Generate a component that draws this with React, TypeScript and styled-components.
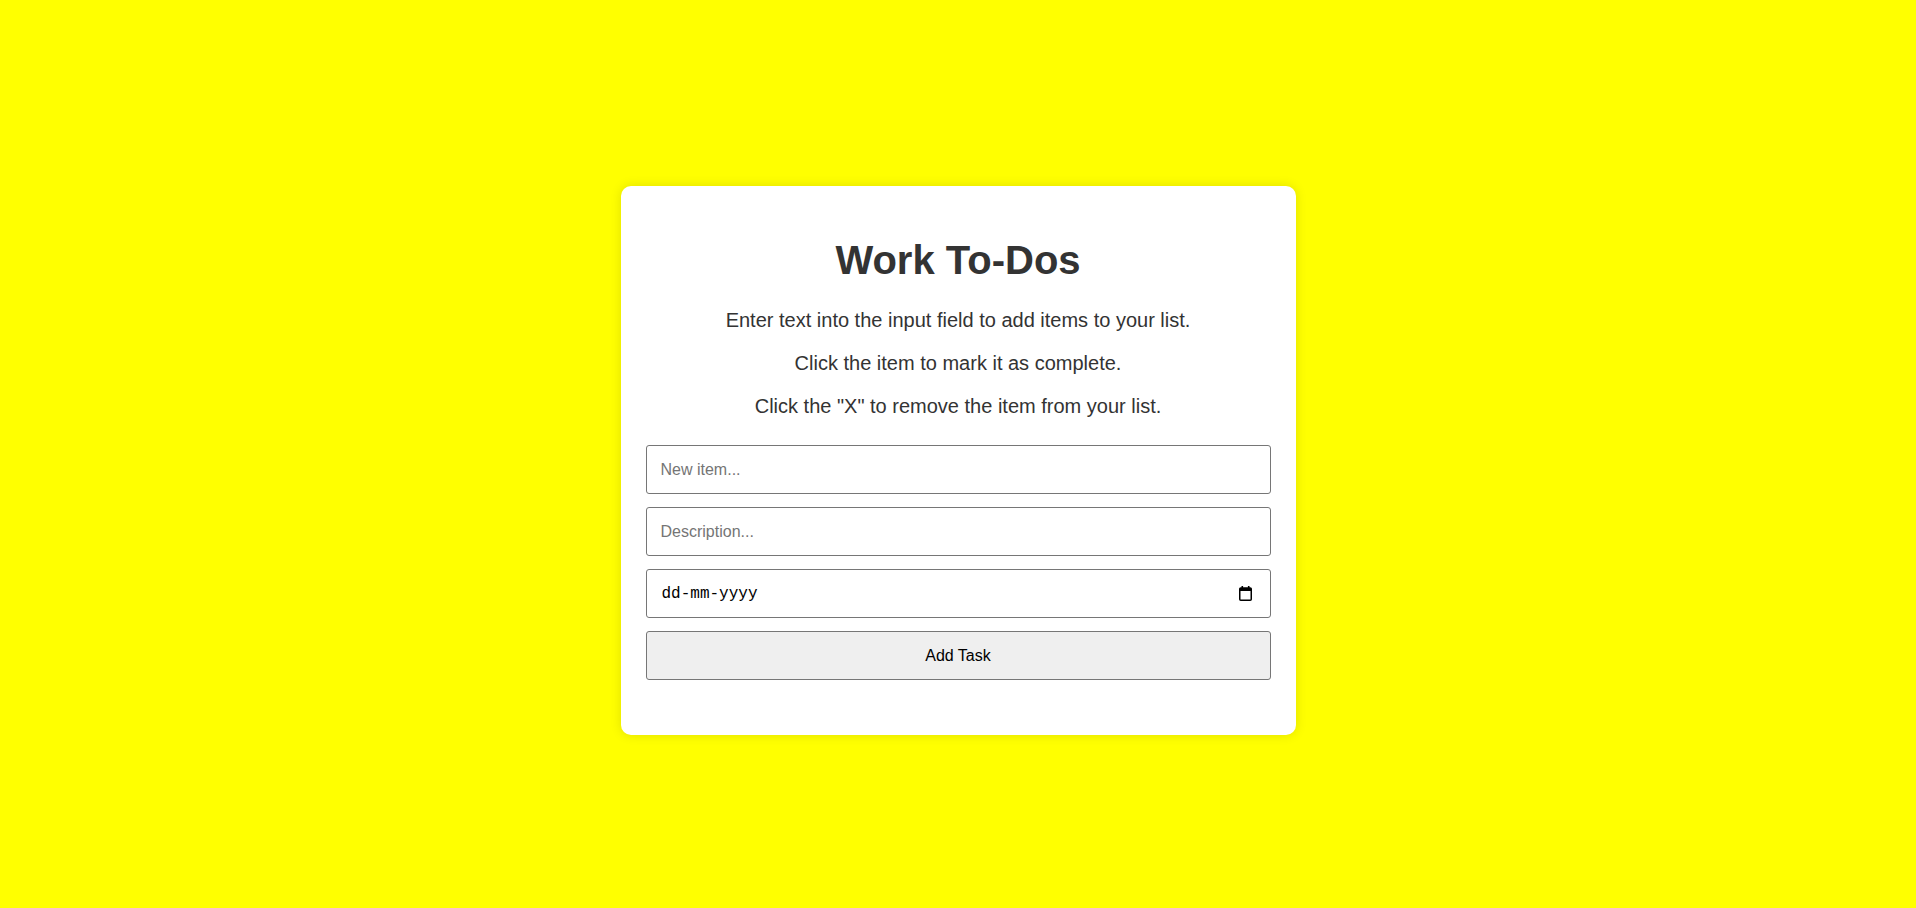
import React from "react";
import styled, { createGlobalStyle } from "styled-components";

const GlobalStyle = createGlobalStyle`
  html, body {
    margin: 0;
    padding: 0;
    background: #ffff00;
    font-family: "Liberation Sans", Arial, sans-serif;
  }
  * { box-sizing: border-box; }
`;

const Page = styled.div`
  min-height: 100vh;
  padding-top: 13px;
  display: flex;
  align-items: center;
  justify-content: center;
`;

const Card = styled.div`
  width: 675px;
  background: #ffffff;
  border-radius: 10px;
  box-shadow: 0 0 12px rgba(0, 0, 0, 0.12);
  padding: 51px 25px 55px;
  display: flex;
  flex-direction: column;
  color: #333333;
`;

const Title = styled.h1`
  margin: 0 0 25px;
  font-size: 40px;
  line-height: 46px;
  font-weight: 700;
  text-align: center;
  color: #333333;
`;

const Instruction = styled.p`
  margin: 0 0 18px;
  font-size: 20px;
  line-height: 25px;
  text-align: center;
  color: #333333;
  &:last-of-type {
    margin-bottom: 26px;
  }
`;

const Form = styled.form`
  display: flex;
  flex-direction: column;
  gap: 13px;
`;

const TextInput = styled.input`
  height: 49px;
  width: 100%;
  padding: 0 14px;
  border: 1px solid #767676;
  border-radius: 3px;
  font-family: "Liberation Sans", Arial, sans-serif;
  font-size: 16px;
  color: #000;
  background: #fff;
  outline: none;
  &::placeholder {
    color: #757575;
  }
`;

const DateField = styled.div`
  height: 49px;
  width: 100%;
  padding: 0 18px 0 14px;
  border: 1px solid #767676;
  border-radius: 3px;
  background: #fff;
  display: flex;
  align-items: center;
  gap: 8px;
`;

const DateInput = styled.input`
  flex: 1;
  border: none;
  outline: none;
  padding: 0 0 0 1px;
  font-family: "Liberation Mono", "DejaVu Sans Mono", monospace;
  font-size: 16px;
  color: #000;
  background: transparent;
  &::placeholder {
    color: #000;
  }
`;

const CalendarIcon = styled.svg`
  width: 13px;
  height: 15px;
  flex: none;
`;

const SubmitButton = styled.button`
  height: 49px;
  width: 100%;
  border: 1px solid #767676;
  border-radius: 3px;
  background: #efefef;
  font-family: "Liberation Sans", Arial, sans-serif;
  font-size: 16px;
  color: #000;
  cursor: pointer;
`;

export default function App() {
  return (
    <>
      <GlobalStyle />
      <Page>
        <Card>
          <Title>Work To-Dos</Title>
          <Instruction>Enter text into the input field to add items to your list.</Instruction>
          <Instruction>Click the item to mark it as complete.</Instruction>
          <Instruction>Click the "X" to remove the item from your list.</Instruction>
          <Form onSubmit={(e) => e.preventDefault()}>
            <TextInput type="text" placeholder="New item..." />
            <TextInput type="text" placeholder="Description..." />
            <DateField>
              <DateInput type="text" placeholder="dd-mm-yyyy" />
              <CalendarIcon viewBox="0 0 13 15" aria-hidden="true">
                <rect x="2.5" y="0" width="1.6" height="3" fill="#000" />
                <rect x="8.9" y="0" width="1.6" height="3" fill="#000" />
                <rect x="0.75" y="2" width="11.5" height="12.25" rx="1" fill="none" stroke="#000" strokeWidth="1.5" />
                <rect x="0.75" y="2" width="11.5" height="3" fill="#000" />
              </CalendarIcon>
            </DateField>
            <SubmitButton type="submit">Add Task</SubmitButton>
          </Form>
        </Card>
      </Page>
    </>
  );
}
